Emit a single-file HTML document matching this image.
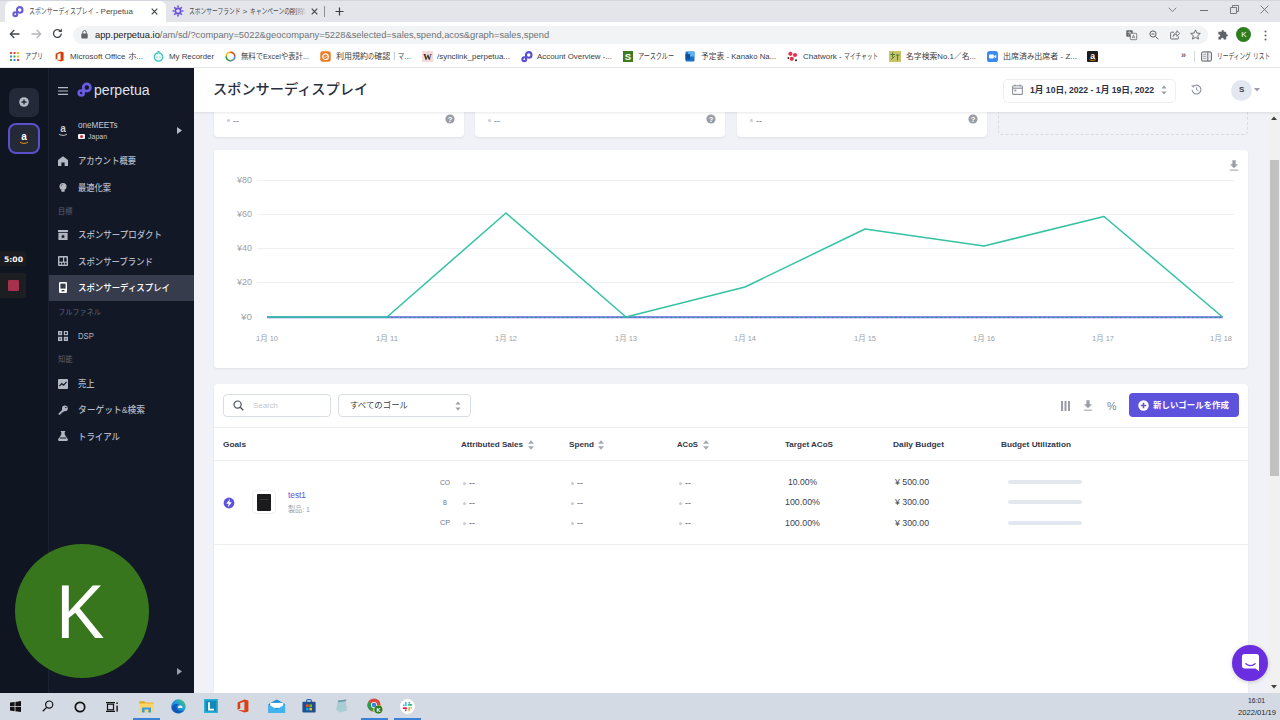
<!DOCTYPE html>
<html lang="ja">
<head>
<meta charset="utf-8">
<title>スポンサーディスプレイ - Perpetua</title>
<style>
*{box-sizing:border-box;margin:0;padding:0}
html,body{width:1280px;height:720px;overflow:hidden;background:#fff}
body{font-family:"Liberation Sans","Noto Sans CJK JP",sans-serif;position:relative;color:#2d3142}
.abs{position:absolute}
.t{position:absolute;white-space:nowrap;line-height:1;transform-origin:0 50%}
svg{position:absolute;overflow:visible}
</style>
</head>
<body>
<div class="abs" style="left:0px;top:0px;width:1280px;height:22px;background:#e3e5eb;"></div>
<div class="abs" style="left:0px;top:0px;width:1280px;height:1px;background:#d3d6dc;"></div>
<div class="abs" style="left:5px;top:1px;width:160.5px;height:22px;background:#fff;border-radius:6px 6px 0 0"></div>
<div class="abs" style="left:0px;top:22px;width:1280px;height:24px;background:#fff;"></div>
<div class="abs" style="left:72.5px;top:25.5px;width:1135px;height:18.5px;background:#f1f3f4;border-radius:9.25px"></div>
<div class="abs" style="left:0px;top:46px;width:1280px;height:22px;background:#fff;border-bottom:1px solid #e6e8eb"></div>
<svg style="left:12px;top:6px" width="12" height="12" viewBox="0 0 12 12"><g fill="none" stroke="#6a5bd8" stroke-width="2.1"><circle cx="7.7" cy="3.9" r="2.8"/><circle cx="3.3" cy="8.2" r="1.9"/><path d="M5.05 3.9V8.2"/></g></svg>
<div class="t" style="left:29px;top:7.66px;color:#45494d;font-size:8px;"><span style="display:inline-block;transform:scaleX(0.738);transform-origin:0 50%;margin-right:-23.03px">スポンサーディスプレイ</span> - Perpetua</div>
<svg style="left:151px;top:8px" width="7" height="7" viewBox="0 0 7 7"><path d="M0.7 0.7L6.3 6.3M6.3 0.7L0.7 6.3" stroke="#3c4043" stroke-width="1.1"/></svg>
<svg style="left:172px;top:5px" width="12" height="12" viewBox="0 0 12 12"><g stroke="#6a4fd8" stroke-width="1.6" fill="none"><circle cx="6" cy="6" r="2.6"/><path d="M6 0.6V2.6M6 9.4V11.4M0.6 6H2.6M9.4 6H11.4M2.2 2.2L3.6 3.6M8.4 8.4L9.8 9.8M2.2 9.8L3.6 8.4M8.4 3.6L9.8 2.2"/></g></svg>
<div class="t" style="left:189px;top:7.66px;color:#45494d;font-size:8px;width:122px;overflow:hidden;"><span style="display:inline-block;transform:scaleX(0.720);transform-origin:0 50%;margin-right:-20.16px">スポンサーブランド</span> &gt; <span style="display:inline-block;transform:scaleX(0.720);transform-origin:0 50%;margin-right:-15.68px">キャンペーンの</span>削除</div>
<div class="abs" style="left:293px;top:4px;width:18px;height:15px;background:linear-gradient(90deg,rgba(227,229,235,0),#e3e5eb 80%);"></div>
<div class="abs" style="left:309px;top:4px;width:16px;height:15px;background:#e3e5eb;"></div>
<svg style="left:311px;top:8px" width="7" height="7" viewBox="0 0 7 7"><path d="M0.7 0.7L6.3 6.3M6.3 0.7L0.7 6.3" stroke="#3c4043" stroke-width="1.1"/></svg>
<div class="abs" style="left:324px;top:6px;width:1px;height:11px;background:#8a8f98;"></div>
<svg style="left:335px;top:7px" width="9" height="9" viewBox="0 0 9 9"><path d="M4.5 0.5V8.5M0.5 4.5H8.5" stroke="#3c4043" stroke-width="1.2"/></svg>
<svg style="left:1168px;top:7px" width="9" height="6" viewBox="0 0 9 6"><path d="M0.8 0.8L4.5 4.6L8.2 0.8" stroke="#7a7e85" stroke-width="1" fill="none"/></svg>
<div class="abs" style="left:1200px;top:10px;width:8px;height:1px;background:#6a6e75;"></div>
<svg style="left:1230px;top:5px" width="9" height="9" viewBox="0 0 9 9"><path d="M0.5 2.5H6.5V8.5H0.5ZM2.5 2.5V0.5H8.5V6.5H6.5" stroke="#6a6e75" stroke-width="0.9" fill="none"/></svg>
<svg style="left:1260px;top:5px" width="9" height="9" viewBox="0 0 9 9"><path d="M0.6 0.6L8.4 8.4M8.4 0.6L0.6 8.4" stroke="#6a6e75" stroke-width="0.9"/></svg>
<svg style="left:9px;top:29px" width="11" height="10" viewBox="0 0 11 10"><path d="M10.5 5H1.5M5.3 1L1.3 5L5.3 9" stroke="#45494d" stroke-width="1.3" fill="none"/></svg>
<svg style="left:31px;top:29px" width="11" height="10" viewBox="0 0 11 10"><path d="M0.5 5H9.5M5.7 1L9.7 5L5.7 9" stroke="#b4b7bc" stroke-width="1.3" fill="none"/></svg>
<svg style="left:52px;top:28px" width="11" height="11" viewBox="0 0 11 11"><path d="M9.3 5.6A3.9 3.9 0 1 1 8.1 2.7" stroke="#45494d" stroke-width="1.3" fill="none"/><path d="M6.3 3.9H9.9V0.4Z" fill="#45494d"/></svg>
<svg style="left:80.5px;top:29.8px" width="7" height="9" viewBox="0 0 7 9"><rect x="0.3" y="3.6" width="6.4" height="5" rx="0.8" fill="#5f6368"/><path d="M1.7 4V2.4A1.8 1.8 0 0 1 5.3 2.4V4" stroke="#5f6368" stroke-width="1" fill="none"/></svg>
<div class="t" style="left:95px;top:30.39px;color:#6f7378;font-size:9.6px;transform:scaleX(0.972);"><span style="color:#202124">app.perpetua.io</span>/am/sd/?company=5022&amp;geocompany=5228&amp;selected=sales,spend,acos&amp;graph=sales,spend</div>
<svg style="left:1126px;top:29.8px" width="11" height="10" viewBox="0 0 11 10"><rect x="0.3" y="0.3" width="6.4" height="6.4" rx="0.8" fill="#5f6368"/><rect x="4.3" y="3.3" width="6.4" height="6.4" rx="0.8" fill="#fff" stroke="#5f6368" stroke-width="0.8"/><path d="M6 8.4L7.5 4.8L9 8.4M6.5 7.3H8.5" stroke="#5f6368" stroke-width="0.7" fill="none"/><path d="M1.6 2.3H5.2M3.4 1.4V2.3M2 5.2C3.4 4.4 4.2 3.4 4.5 2.3" stroke="#fff" stroke-width="0.6" fill="none"/></svg>
<svg style="left:1148.5px;top:29.8px" width="10" height="10" viewBox="0 0 10 10"><circle cx="4" cy="4" r="3.1" stroke="#5f6368" stroke-width="1" fill="none"/><path d="M6.4 6.4L9.3 9.3M2.5 4H5.5" stroke="#5f6368" stroke-width="1"/></svg>
<svg style="left:1169.5px;top:28.8px" width="10" height="11" viewBox="0 0 10 11"><path d="M4 3.2H1.6A1 1 0 0 0 0.6 4.2V9A1 1 0 0 0 1.6 10H7.4A1 1 0 0 0 8.4 9V7.4" stroke="#5f6368" stroke-width="0.9" fill="none"/><path d="M3.2 7.4C3.4 5 5 3.8 6.8 3.6V1.6L9.7 4.4L6.8 7.2V5.2C5.4 5.2 4.2 5.8 3.2 7.4Z" stroke="#5f6368" stroke-width="0.8" fill="none"/></svg>
<svg style="left:1190.3px;top:28.9px" width="11" height="11" viewBox="0 0 11 11"><path d="M5.5 0.9L6.9 4.1L10.3 4.4L7.7 6.7L8.5 10.1L5.5 8.3L2.5 10.1L3.3 6.7L0.7 4.4L4.1 4.1Z" stroke="#5f6368" stroke-width="0.9" fill="none" stroke-linejoin="round"/></svg>
<svg style="left:1217.5px;top:29.8px" width="10" height="10" viewBox="0 0 10 10"><path d="M3.6 1.2A1.1 1.1 0 0 1 5.8 1.2V1.8H8.2V4.2H8.8A1.1 1.1 0 0 1 8.8 6.4H8.2V9.6H5.6V8.9A1.2 1.2 0 0 0 3.2 8.9V9.6H0.4V6.8H1.1A1.2 1.2 0 0 0 1.1 4.4H0.4V1.8H3.6Z" fill="#5f6368"/></svg>
<div class="abs" style="left:1236.4px;top:27.2px;width:15px;height:15px;background:#2e7d1f;border-radius:50%"></div>
<div class="t" style="left:1241.2px;top:31.16px;color:#fff;font-size:8px;">K</div>
<svg style="left:1264.3px;top:29.7px" width="3" height="11" viewBox="0 0 3 11"><circle cx="1.5" cy="1.5" r="1" fill="#5f6368"/><circle cx="1.5" cy="5.5" r="1" fill="#5f6368"/><circle cx="1.5" cy="9.5" r="1" fill="#5f6368"/></svg>
<svg style="left:10px;top:52px" width="9" height="9" viewBox="0 0 9 9"><rect x="0" y="0" width="2" height="2" fill="#ea4335"/><rect x="3.5" y="0" width="2" height="2" fill="#ea4335"/><rect x="7" y="0" width="2" height="2" fill="#fbbc05"/><rect x="0" y="3.5" width="2" height="2" fill="#4285f4"/><rect x="3.5" y="3.5" width="2" height="2" fill="#34a853"/><rect x="7" y="3.5" width="2" height="2" fill="#fbbc05"/><rect x="0" y="7" width="2" height="2" fill="#34a853"/><rect x="3.5" y="7" width="2" height="2" fill="#4285f4"/><rect x="7" y="7" width="2" height="2" fill="#ea4335"/></svg>
<div class="t" style="left:25px;top:53.06px;color:#3c4043;font-size:8px;"><span style="display:inline-block;transform:scaleX(0.750);transform-origin:0 50%;margin-right:-6.00px">アプリ</span></div>
<svg style="left:55px;top:51px" width="9" height="11" viewBox="0 0 9 11"><path d="M0.6 2.8L5.6 0.4L8.6 1.4V9.6L5.6 10.6L0.6 8.4L5.6 9V2.2L2.4 3.2V7.4L0.6 8.4Z" fill="#d83b01"/></svg>
<div class="t" style="left:70px;top:53.06px;color:#3c4043;font-size:8px;">Microsoft Office <span style="display:inline-block;transform:scaleX(1.086);transform-origin:0 50%;margin-right:0.69px">ホ</span>...</div>
<svg style="left:153px;top:51px" width="11" height="11" viewBox="0 0 11 11"><circle cx="5.5" cy="6" r="4.2" fill="#e8fbfa" stroke="#2fc6c2" stroke-width="1.2"/><path d="M4.3 0.7H6.7" stroke="#2fc6c2" stroke-width="1.2"/><circle cx="4" cy="6" r="0.6" fill="#e57a44"/><circle cx="7" cy="6" r="0.6" fill="#e57a44"/></svg>
<div class="t" style="left:169px;top:53.06px;color:#3c4043;font-size:8px;transform:scaleX(0.983);">My Recorder</div>
<svg style="left:225px;top:51px" width="11" height="11" viewBox="0 0 11 11"><circle cx="5.5" cy="5.5" r="4.3" fill="none" stroke="#f4b400" stroke-width="1.5"/><path d="M5.5 1.2A4.3 4.3 0 0 1 9.8 5.5" stroke="#db4437" stroke-width="1.5" fill="none"/><path d="M1.2 5.5A4.3 4.3 0 0 0 5.5 9.8" stroke="#0f9d58" stroke-width="1.5" fill="none"/><path d="M5.5 9.8A4.3 4.3 0 0 0 9.8 5.5" stroke="#4285f4" stroke-width="1.5" fill="none"/></svg>
<div class="t" style="left:241px;top:53.06px;color:#3c4043;font-size:8px;transform:scaleX(0.916);">無料でExcelや表計...</div>
<svg style="left:320px;top:51px" width="11" height="11" viewBox="0 0 11 11"><rect x="0.3" y="0.3" width="10.4" height="10.4" rx="2.2" fill="#ee7a22"/><circle cx="5.5" cy="5.7" r="2.8" fill="none" stroke="#fff" stroke-width="1.2"/><path d="M4.2 5.7L5.2 6.7L7 4.6" stroke="#fff" stroke-width="0.9" fill="none"/></svg>
<div class="t" style="left:336px;top:53.06px;color:#3c4043;font-size:8px;">利用規約<span style="display:inline-block;transform:scaleX(0.771);transform-origin:0 50%;margin-right:-1.84px">の</span>確認｜<span style="display:inline-block;transform:scaleX(0.771);transform-origin:0 50%;margin-right:-1.84px">マ</span>...</div>
<svg style="left:422px;top:51px" width="11" height="11" viewBox="0 0 11 11"><rect width="11" height="11" fill="#f6dada"/><text x="5.5" y="8.6" font-size="8.5" font-weight="bold" font-family="Liberation Serif,serif" text-anchor="middle" fill="#222">W</text></svg>
<div class="t" style="left:437px;top:53.06px;color:#3c4043;font-size:8px;transform:scaleX(0.995);">/synclink_perpetua...</div>
<svg style="left:521px;top:51px" width="12" height="12" viewBox="0 0 12 12"><g fill="none" stroke="#5a4fd0" stroke-width="2.1"><circle cx="7.7" cy="3.9" r="2.8"/><circle cx="3.3" cy="8.2" r="1.9"/><path d="M5.05 3.9V8.2"/></g></svg>
<div class="t" style="left:537px;top:53.06px;color:#3c4043;font-size:8px;transform:scaleX(0.986);">Account Overview -...</div>
<svg style="left:623px;top:51px" width="10" height="11" viewBox="0 0 10 11"><rect width="10" height="11" fill="#3f7a27"/><text x="5" y="9" font-size="9.5" font-weight="bold" font-family="Liberation Sans,sans-serif" text-anchor="middle" fill="#fff">S</text></svg>
<div class="t" style="left:638px;top:53.06px;color:#3c4043;font-size:8px;"><span style="display:inline-block;transform:scaleX(0.773);transform-origin:0 50%;margin-right:-10.89px">アースクルー</span></div>
<svg style="left:685px;top:51px" width="10" height="11" viewBox="0 0 10 11"><rect x="0.5" y="0.5" width="9" height="10" rx="1" fill="#1b72c4"/><rect x="3" y="0.5" width="6.5" height="5" fill="#5db1f0"/><rect x="0.5" y="3" width="4.5" height="5.5" fill="#0f4f9a"/></svg>
<div class="t" style="left:701px;top:53.06px;color:#3c4043;font-size:8px;transform:scaleX(0.970);">予定表 - Kanako Na...</div>
<svg style="left:787px;top:51px" width="11" height="11" viewBox="0 0 11 11"><g fill="#e8324a"><circle cx="3.4" cy="2.8" r="2.1"/><circle cx="8" cy="4" r="2.1"/><circle cx="4.8" cy="7.8" r="2.1"/></g><circle cx="9" cy="9.2" r="1" fill="#222"/><circle cx="1.4" cy="7" r="0.9" fill="#222"/></svg>
<div class="t" style="left:803px;top:53.06px;color:#3c4043;font-size:8px;">Chatwork - <span style="display:inline-block;transform:scaleX(0.712);transform-origin:0 50%;margin-right:-13.83px">マイチャット</span></div>
<svg style="left:889px;top:51px" width="12" height="11" viewBox="0 0 12 11"><rect width="12" height="11" fill="#c9c46a"/><path d="M1.5 3.5H6M3.6 1.4V6.4M2 8.6L5.6 5.4M7 4H10.5M8.6 4V9.5" stroke="#4f7a2a" stroke-width="1"/></svg>
<div class="t" style="left:906px;top:53.06px;color:#3c4043;font-size:8px;transform:scaleX(0.978);">名字検索No.1／名...</div>
<svg style="left:987px;top:51px" width="11" height="11" viewBox="0 0 11 11"><rect width="11" height="11" rx="2.6" fill="#3c8cf0"/><rect x="2" y="3.6" width="4.8" height="3.8" rx="0.8" fill="#fff"/><path d="M7.2 5L9.2 3.7V7.3L7.2 6Z" fill="#fff"/></svg>
<div class="t" style="left:1003px;top:53.06px;color:#3c4043;font-size:8px;">出席済<span style="display:inline-block;transform:scaleX(0.916);transform-origin:0 50%;margin-right:-0.67px">み</span>出席者 - Z...</div>
<svg style="left:1087px;top:51px" width="11" height="11" viewBox="0 0 11 11"><rect width="11" height="11" rx="1" fill="#1c1c1c"/><text x="5.5" y="7.6" font-size="8.5" font-weight="bold" font-family="Liberation Sans,sans-serif" text-anchor="middle" fill="#fff">a</text><path d="M2.4 8.6C4.4 9.8 6.8 9.8 8.8 8.6" stroke="#f90" stroke-width="0.8" fill="none"/></svg>
<div class="t" style="left:1181px;top:51.18px;color:#5f6368;font-size:9px;font-weight:bold;">»</div>
<div class="abs" style="left:1194px;top:50.5px;width:1px;height:11px;background:#d5d8dd;"></div>
<svg style="left:1201px;top:51px" width="11" height="11" viewBox="0 0 11 11"><rect x="0.6" y="0.9" width="9.8" height="9.2" rx="1.2" fill="#eceef0" stroke="#5f6368" stroke-width="1"/><path d="M6.8 1V10" stroke="#5f6368" stroke-width="0.9"/><path d="M2.2 3.4H5.2M2.2 5.4H5.2M2.2 7.4H5.2" stroke="#8a8e94" stroke-width="0.7"/></svg>
<div class="t" style="left:1217px;top:53.06px;color:#3c4043;font-size:8px;"><span style="display:inline-block;transform:scaleX(0.713);transform-origin:0 50%;margin-right:-13.78px">リーディング</span> <span style="display:inline-block;transform:scaleX(0.713);transform-origin:0 50%;margin-right:-6.89px">リスト</span></div>
<div class="abs" style="left:194px;top:68px;width:1074px;height:625px;background:#f0f2f7;"></div>
<div class="abs" style="left:214px;top:100px;width:250px;height:37px;background:#fff;border-radius:4px;box-shadow:0 1px 2px rgba(60,70,100,.10);"></div>
<div class="abs" style="left:227px;top:119px;width:3px;height:3px;background:#c9ccd3;border-radius:50%"></div>
<div class="t" style="left:233px;top:116.66px;color:#8b8f9a;font-size:8px;font-weight:bold;transform:scaleX(1.126);">--</div>
<svg style="left:445px;top:114px" width="10" height="10" viewBox="0 0 10 10"><circle cx="5" cy="5" r="4.6" fill="#9a9da6"/><text x="5" y="7.6" font-size="7.5" font-weight="bold" text-anchor="middle" fill="#fff" font-family="Liberation Sans,sans-serif">?</text></svg>
<div class="abs" style="left:475px;top:100px;width:250px;height:37px;background:#fff;border-radius:4px;box-shadow:0 1px 2px rgba(60,70,100,.10);"></div>
<div class="abs" style="left:488px;top:119px;width:3px;height:3px;background:#c9ccd3;border-radius:50%"></div>
<div class="t" style="left:494px;top:116.66px;color:#8b8f9a;font-size:8px;font-weight:bold;transform:scaleX(1.126);">--</div>
<svg style="left:706px;top:114px" width="10" height="10" viewBox="0 0 10 10"><circle cx="5" cy="5" r="4.6" fill="#9a9da6"/><text x="5" y="7.6" font-size="7.5" font-weight="bold" text-anchor="middle" fill="#fff" font-family="Liberation Sans,sans-serif">?</text></svg>
<div class="abs" style="left:737px;top:100px;width:250px;height:37px;background:#fff;border-radius:4px;box-shadow:0 1px 2px rgba(60,70,100,.10);"></div>
<div class="abs" style="left:750px;top:119px;width:3px;height:3px;background:#c9ccd3;border-radius:50%"></div>
<div class="t" style="left:756px;top:116.66px;color:#8b8f9a;font-size:8px;font-weight:bold;transform:scaleX(1.126);">--</div>
<svg style="left:968px;top:114px" width="10" height="10" viewBox="0 0 10 10"><circle cx="5" cy="5" r="4.6" fill="#9a9da6"/><text x="5" y="7.6" font-size="7.5" font-weight="bold" text-anchor="middle" fill="#fff" font-family="Liberation Sans,sans-serif">?</text></svg>
<div class="abs" style="left:998px;top:100px;width:250px;height:35px;background:#f0f2f7;border:1px dashed #d5dae4;border-radius:4px"></div>
<div class="abs" style="left:214px;top:150px;width:1034px;height:218px;background:#fff;border-radius:4px;box-shadow:0 1px 2px rgba(60,70,100,.10);"></div>
<svg style="left:1229px;top:160px" width="10" height="11" viewBox="0 0 10 11"><path d="M3.4 0.3H6.6V4.2H9L5 8.2L1 4.2H3.4Z" fill="#9a9da8"/><rect x="0.8" y="9.6" width="8.4" height="1" fill="#9a9da8"/></svg>
<svg style="left:0;top:0" width="1280" height="720" viewBox="0 0 1280 720"><g stroke="#eef0f4" stroke-width="1"><path d="M257 180.5H1234"/><path d="M257 214.5H1234"/><path d="M257 248.5H1234"/><path d="M257 282.5H1234"/></g><path d="M267 317.3H1222.5" stroke="#6c5fe0" stroke-width="2" fill="none"/><path d="M267 317.3H1222.5" stroke="#35c4a3" stroke-width="1" stroke-dasharray="2.5 2" fill="none"/><path d="M267 317 L387 317 L506 213 L626 317 L745 287 L865 229 L984 246 L1104 216.5 L1222.5 317" stroke="#34c3a2" stroke-width="1.5" fill="none" stroke-linejoin="round"/></svg>
<div class="t" style="left:237px;top:175.92px;color:#9b9fa9;font-size:8.5px;transform:scaleX(1.057);">¥80</div>
<div class="t" style="left:237px;top:209.92px;color:#9b9fa9;font-size:8.5px;transform:scaleX(1.057);">¥60</div>
<div class="t" style="left:237px;top:243.92px;color:#9b9fa9;font-size:8.5px;transform:scaleX(1.057);">¥40</div>
<div class="t" style="left:237px;top:277.92px;color:#9b9fa9;font-size:8.5px;transform:scaleX(1.057);">¥20</div>
<div class="t" style="left:241px;top:312.92px;color:#9b9fa9;font-size:8.5px;transform:scaleX(1.162);">¥0</div>
<div class="t" style="left:256px;top:335.16px;color:#9b9fa9;font-size:8px;transform:scaleX(0.933);">1月 10</div>
<div class="t" style="left:376px;top:335.16px;color:#9b9fa9;font-size:8px;transform:scaleX(0.957);">1月 11</div>
<div class="t" style="left:495px;top:335.16px;color:#9b9fa9;font-size:8px;transform:scaleX(0.933);">1月 12</div>
<div class="t" style="left:615px;top:335.16px;color:#9b9fa9;font-size:8px;transform:scaleX(0.933);">1月 13</div>
<div class="t" style="left:734px;top:335.16px;color:#9b9fa9;font-size:8px;transform:scaleX(0.933);">1月 14</div>
<div class="t" style="left:854px;top:335.16px;color:#9b9fa9;font-size:8px;transform:scaleX(0.933);">1月 15</div>
<div class="t" style="left:973px;top:335.16px;color:#9b9fa9;font-size:8px;transform:scaleX(0.933);">1月 16</div>
<div class="t" style="left:1092px;top:335.16px;color:#9b9fa9;font-size:8px;transform:scaleX(0.933);">1月 17</div>
<div class="t" style="left:1210px;top:335.16px;color:#9b9fa9;font-size:8px;transform:scaleX(0.933);">1月 18</div>
<div class="abs" style="left:214px;top:384px;width:1034px;height:320px;background:#fff;border-radius:4px;box-shadow:0 1px 2px rgba(60,70,100,.10);"></div>
<div class="abs" style="left:223px;top:394px;width:108px;height:23px;background:#fff;border:1px solid #d9dde6;border-radius:4px"></div>
<svg style="left:233px;top:400px" width="11" height="11" viewBox="0 0 11 11"><circle cx="4.6" cy="4.6" r="3.6" fill="none" stroke="#4a4f5c" stroke-width="1.2"/><path d="M7.3 7.3L10.3 10.3" stroke="#4a4f5c" stroke-width="1.3"/></svg>
<div class="t" style="left:253px;top:401.66px;color:#c3c7d1;font-size:8px;transform:scaleX(0.986);">Search</div>
<div class="abs" style="left:338px;top:394px;width:133px;height:23px;background:#fff;border:1px solid #d9dde6;border-radius:4px"></div>
<div class="t" style="left:350px;top:401.42px;color:#3a3f50;font-size:8.5px;transform:scaleX(0.990);">すべてのゴール</div>
<svg style="left:455px;top:401px" width="6" height="10" viewBox="0 0 6 10"><path d="M0.5 3.6L3 0.6L5.5 3.6Z" fill="#9a9da8"/><path d="M0.5 6.4L3 9.4L5.5 6.4Z" fill="#9a9da8"/></svg>
<svg style="left:1061px;top:401px" width="9" height="10" viewBox="0 0 9 10"><rect x="0" y="0" width="2" height="10" fill="#9a9da8"/><rect x="3.5" y="0" width="2" height="10" fill="#9a9da8"/><rect x="7" y="0" width="2" height="10" fill="#9a9da8"/></svg>
<svg style="left:1083px;top:400px" width="10" height="11" viewBox="0 0 10 11"><path d="M3.4 0.3H6.6V4.2H9L5 8.2L1 4.2H3.4Z" fill="#9a9da8"/><rect x="0.8" y="9.6" width="8.4" height="1" fill="#9a9da8"/></svg>
<div class="t" style="left:1106.5px;top:400.52px;color:#80848f;font-size:11px;transform:scaleX(0.971);">%</div>
<div class="abs" style="left:1129px;top:393px;width:110px;height:24px;background:#5d52dc;border-radius:4px"></div>
<svg style="left:1138px;top:400px" width="11" height="11" viewBox="0 0 11 11"><circle cx="5.5" cy="5.5" r="5.2" fill="#fff"/><path d="M5.5 2.8V8.2M2.8 5.5H8.2" stroke="#5d52dc" stroke-width="1.5"/></svg>
<div class="t" style="left:1153px;top:401.22px;color:#fff;font-size:8.5px;font-weight:bold;transform:scaleX(0.993);">新しいゴールを作成</div>
<div class="abs" style="left:214px;top:427px;width:1034px;height:1px;background:#eceff4;"></div>
<div class="abs" style="left:214px;top:460px;width:1034px;height:1px;background:#eceff4;"></div>
<div class="abs" style="left:214px;top:544px;width:1034px;height:1px;background:#eceff4;"></div>
<div class="t" style="left:223px;top:440.66px;color:#33374a;font-size:8px;font-weight:bold;transform:scaleX(1.034);">Goals</div>
<div class="t" style="left:461px;top:440.66px;color:#33374a;font-size:8px;font-weight:bold;transform:scaleX(1.011);">Attributed Sales</div>
<div class="t" style="left:569px;top:440.66px;color:#33374a;font-size:8px;font-weight:bold;transform:scaleX(1.022);">Spend</div>
<div class="t" style="left:677px;top:440.66px;color:#33374a;font-size:8px;font-weight:bold;transform:scaleX(0.964);">ACoS</div>
<div class="t" style="left:785px;top:440.66px;color:#33374a;font-size:8px;font-weight:bold;transform:scaleX(1.009);">Target ACoS</div>
<div class="t" style="left:893px;top:440.66px;color:#33374a;font-size:8px;font-weight:bold;transform:scaleX(1.043);">Daily Budget</div>
<div class="t" style="left:1001px;top:440.66px;color:#33374a;font-size:8px;font-weight:bold;transform:scaleX(1.029);">Budget Utilization</div>
<svg style="left:528px;top:439.8px" width="6" height="10" viewBox="0 0 6 10"><path d="M0 3.8L3 0.2L6 3.8Z" fill="#a4a8b3"/><path d="M0 6.2L3 9.8L6 6.2Z" fill="#a4a8b3"/></svg>
<svg style="left:598px;top:439.8px" width="6" height="10" viewBox="0 0 6 10"><path d="M0 3.8L3 0.2L6 3.8Z" fill="#a4a8b3"/><path d="M0 6.2L3 9.8L6 6.2Z" fill="#a4a8b3"/></svg>
<svg style="left:703px;top:439.8px" width="6" height="10" viewBox="0 0 6 10"><path d="M0 3.8L3 0.2L6 3.8Z" fill="#a4a8b3"/><path d="M0 6.2L3 9.8L6 6.2Z" fill="#a4a8b3"/></svg>
<div class="t" style="left:440px;top:478.66px;color:#6f7483;font-size:8px;transform:scaleX(0.833);">CO</div>
<div class="abs" style="left:463px;top:481.5px;width:3px;height:3px;background:#c9ccd3;border-radius:50%"></div>
<div class="t" style="left:469px;top:478.66px;color:#777b87;font-size:8px;font-weight:bold;transform:scaleX(1.126);">--</div>
<div class="abs" style="left:571px;top:481.5px;width:3px;height:3px;background:#c9ccd3;border-radius:50%"></div>
<div class="t" style="left:577px;top:478.66px;color:#777b87;font-size:8px;font-weight:bold;transform:scaleX(1.126);">--</div>
<div class="abs" style="left:679px;top:481.5px;width:3px;height:3px;background:#c9ccd3;border-radius:50%"></div>
<div class="t" style="left:685px;top:478.66px;color:#777b87;font-size:8px;font-weight:bold;transform:scaleX(1.126);">--</div>
<div class="t" style="left:788px;top:478.42px;color:#3a3f50;font-size:8.5px;transform:scaleX(1.005);">10.00%</div>
<div class="t" style="left:895px;top:478.42px;color:#3a3f50;font-size:8.5px;transform:scaleX(1.027);">¥ 500.00</div>
<div class="abs" style="left:1008px;top:480.0px;width:74px;height:4px;background:#e3e7ef;border-radius:2px"></div>
<div class="t" style="left:443px;top:498.66px;color:#6f7483;font-size:8px;transform:scaleX(0.749);">B</div>
<div class="abs" style="left:463px;top:501.5px;width:3px;height:3px;background:#c9ccd3;border-radius:50%"></div>
<div class="t" style="left:469px;top:498.66px;color:#777b87;font-size:8px;font-weight:bold;transform:scaleX(1.126);">--</div>
<div class="abs" style="left:571px;top:501.5px;width:3px;height:3px;background:#c9ccd3;border-radius:50%"></div>
<div class="t" style="left:577px;top:498.66px;color:#777b87;font-size:8px;font-weight:bold;transform:scaleX(1.126);">--</div>
<div class="abs" style="left:679px;top:501.5px;width:3px;height:3px;background:#c9ccd3;border-radius:50%"></div>
<div class="t" style="left:685px;top:498.66px;color:#777b87;font-size:8px;font-weight:bold;transform:scaleX(1.126);">--</div>
<div class="t" style="left:785px;top:498.42px;color:#3a3f50;font-size:8.5px;transform:scaleX(1.043);">100.00%</div>
<div class="t" style="left:895px;top:498.42px;color:#3a3f50;font-size:8.5px;transform:scaleX(1.027);">¥ 300.00</div>
<div class="abs" style="left:1008px;top:500.0px;width:74px;height:4px;background:#e3e7ef;border-radius:2px"></div>
<div class="t" style="left:440px;top:519.16px;color:#6f7483;font-size:8px;transform:scaleX(0.899);">CP</div>
<div class="abs" style="left:463px;top:522px;width:3px;height:3px;background:#c9ccd3;border-radius:50%"></div>
<div class="t" style="left:469px;top:519.16px;color:#777b87;font-size:8px;font-weight:bold;transform:scaleX(1.126);">--</div>
<div class="abs" style="left:571px;top:522px;width:3px;height:3px;background:#c9ccd3;border-radius:50%"></div>
<div class="t" style="left:577px;top:519.16px;color:#777b87;font-size:8px;font-weight:bold;transform:scaleX(1.126);">--</div>
<div class="abs" style="left:679px;top:522px;width:3px;height:3px;background:#c9ccd3;border-radius:50%"></div>
<div class="t" style="left:685px;top:519.16px;color:#777b87;font-size:8px;font-weight:bold;transform:scaleX(1.126);">--</div>
<div class="t" style="left:785px;top:518.92px;color:#3a3f50;font-size:8.5px;transform:scaleX(1.043);">100.00%</div>
<div class="t" style="left:895px;top:518.92px;color:#3a3f50;font-size:8.5px;transform:scaleX(1.027);">¥ 300.00</div>
<div class="abs" style="left:1008px;top:520.5px;width:74px;height:4px;background:#e3e7ef;border-radius:2px"></div>
<svg style="left:223px;top:496.5px" width="12" height="12" viewBox="0 0 12 12"><circle cx="6" cy="6" r="5.4" fill="#5d52dc"/><path d="M7 1.8L3.2 6.8H5.6L5 10.2L8.8 5.2H6.4Z" fill="#fff"/></svg>
<div class="abs" style="left:252px;top:490px;width:24px;height:24px;background:#fff;border:1px solid #eceff4;border-radius:4px"></div>
<div class="abs" style="left:257px;top:494px;width:14px;height:17px;background:#1b1b1d;border-radius:1px"></div>
<div class="abs" style="left:260px;top:499px;width:8px;height:1px;background:#3a3a3e;"></div>
<div class="t" style="left:288px;top:490.92px;color:#5d52dc;font-size:8.5px;transform:scaleX(0.976);">test1</div>
<div class="t" style="left:288px;top:505.9px;color:#9b9fa9;font-size:7.5px;transform:scaleX(0.942);">製品: 1</div>
<div class="abs" style="left:1268px;top:112px;width:12px;height:581px;background:#f1f1f1;"></div>
<div class="abs" style="left:1270px;top:160px;width:9px;height:316px;background:#c1c1c1;"></div>
<svg style="left:1271px;top:116px" width="6" height="4" viewBox="0 0 6 4"><path d="M0 4L3 0.4L6 4Z" fill="#404040"/></svg>
<svg style="left:1271px;top:685px" width="6" height="4" viewBox="0 0 6 4"><path d="M0 0L3 3.6L6 0Z" fill="#404040"/></svg>
<div class="abs" style="left:1232px;top:645px;width:36px;height:36px;background:#6b2de0;border-radius:50%;box-shadow:0 1px 4px rgba(0,0,0,.2)"></div>
<svg style="left:1240.6px;top:653.4px" width="19" height="19.4" viewBox="0 0 18 18"><path d="M3.5 0.8H14.5A2.6 2.6 0 0 1 17.1 3.4V17.2L13.6 14.6H3.5A2.6 2.6 0 0 1 0.9 12V3.4A2.6 2.6 0 0 1 3.5 0.8Z" fill="#fff"/><path d="M4.6 10C7.2 12 10.8 12 13.4 10" stroke="#6b2de0" stroke-width="1.2" fill="none" stroke-linecap="round"/></svg>
<div class="abs" style="left:194px;top:68px;width:1086px;height:44px;background:#fff;box-shadow:0 1px 2px rgba(60,70,100,.12)"></div>
<div class="t" style="left:213px;top:82.48px;color:#2a2e3f;font-size:14.2px;font-weight:500;">スポンサーディスプレイ</div>
<div class="abs" style="left:1003px;top:78.5px;width:173px;height:24px;background:#fff;border:1px solid #edeff4;border-radius:5px"></div>
<svg style="left:1012px;top:84px" width="11" height="11" viewBox="0 0 11 11"><rect x="0.6" y="1.8" width="9.8" height="8.6" rx="1" fill="none" stroke="#8f93a0" stroke-width="1.1"/><path d="M0.6 4.2H10.4" stroke="#8f93a0" stroke-width="1.2"/><path d="M3 0.4V2.6M8 0.4V2.6" stroke="#8f93a0" stroke-width="1.1"/><rect x="2.4" y="5.6" width="2" height="1.8" fill="#8f93a0"/></svg>
<div class="t" style="left:1030px;top:85.68px;color:#2d3142;font-size:9px;font-weight:bold;transform:scaleX(0.961);">1月 10日, 2022 - 1月 19日, 2022</div>
<svg style="left:1161px;top:85px" width="6" height="10" viewBox="0 0 6 10"><path d="M0.5 3.6L3 0.6L5.5 3.6Z" fill="#9a9da8"/><path d="M0.5 6.4L3 9.4L5.5 6.4Z" fill="#9a9da8"/></svg>
<svg style="left:1191px;top:84px" width="11" height="11" viewBox="0 0 11 11"><path d="M2.2 2.6A4.4 4.4 0 1 1 1.1 5.8" stroke="#8f93a0" stroke-width="1.1" fill="none"/><path d="M0.2 1.4L2.9 1.2L2.7 4Z" fill="#8f93a0"/><path d="M5.6 3.2V5.8L7.4 6.9" stroke="#8f93a0" stroke-width="1" fill="none"/></svg>
<div class="abs" style="left:1231px;top:79.5px;width:21px;height:21px;background:#e3e7f0;border-radius:50%"></div>
<div class="t" style="left:1238.9px;top:86.16px;color:#3a3f50;font-size:8px;font-weight:bold;">S</div>
<svg style="left:1254px;top:88px" width="6" height="4" viewBox="0 0 6 4"><path d="M0 0L3 3.6L6 0Z" fill="#9a9da8"/></svg>
<div class="abs" style="left:0px;top:68px;width:48px;height:625px;background:#101522;"></div>
<div class="abs" style="left:48px;top:68px;width:146px;height:625px;background:#121826;border-left:1px solid #1b2130"></div>
<div class="abs" style="left:9px;top:88px;width:30px;height:29px;background:#232937;border-radius:7px"></div>
<svg style="left:19px;top:97px" width="10" height="10" viewBox="0 0 10 10"><circle cx="5" cy="5" r="4.8" fill="#b6bac4"/><path d="M5 2.4V7.6M2.4 5H7.6" stroke="#252b38" stroke-width="1.4"/></svg>
<div class="abs" style="left:8px;top:122.5px;width:32px;height:31.5px;background:#232937;border:2px solid #5b50cc;border-radius:8px"></div>
<svg style="left:19px;top:133px" width="10" height="11" viewBox="0 0 10 11"><text x="5" y="7.4" font-size="10" font-weight="bold" font-family="Liberation Sans,sans-serif" text-anchor="middle" fill="#fff">a</text><path d="M1 9.2C3.4 10.8 6.6 10.8 9 9.2" stroke="#f90" stroke-width="0.9" fill="none"/></svg>
<div class="abs" style="left:0px;top:251px;width:26px;height:15px;background:#1a1c1f;border-radius:0 2px 2px 0"></div>
<div class="t" style="left:4px;top:256.0px;color:#fff;font-size:7.5px;font-weight:bold;font-family:'DejaVu Sans',sans-serif;transform:scaleX(1.018);">5:00</div>
<div class="abs" style="left:0px;top:273px;width:26px;height:25px;background:#1c1e22;border-radius:0 2px 2px 0"></div>
<div class="abs" style="left:8px;top:280px;width:11px;height:11px;background:#a5324a;border-radius:1px"></div>
<div class="abs" style="left:15px;top:544px;width:134px;height:134px;background:#38761d;border-radius:50%"></div>
<div class="t" style="left:56.4px;top:573.52px;color:#fff;font-size:76px;transform:scaleX(0.955);">K</div>
<svg style="left:176.6px;top:667.6px" width="5" height="7" viewBox="0 0 5 7"><path d="M0 0L5 3.5L0 7Z" fill="#9a9eaa"/></svg>
<svg style="left:58px;top:87px" width="10" height="8" viewBox="0 0 10 8"><path d="M0 0.7H10M0 4H10M0 7.3H10" stroke="#b6bac4" stroke-width="1.2"/></svg>
<svg style="left:77px;top:83px" width="17" height="14" viewBox="0 0 17 14"><g fill="none" stroke="#6a5ce0" stroke-width="2.7"><circle cx="9.8" cy="4.5" r="3.6"/><circle cx="4.2" cy="10" r="2.5"/><path d="M6.45 4.5V10"/></g></svg>
<div class="t" style="left:94.4px;top:82.58px;color:#dfe2ea;font-size:14px;transform:scaleX(1.006);">perpetua</div>
<svg style="left:58px;top:125px" width="10" height="11" viewBox="0 0 10 11"><text x="5" y="7.4" font-size="10" font-weight="bold" font-family="Liberation Sans,sans-serif" text-anchor="middle" fill="#c9ccd6">a</text><path d="M1 9.2C3.4 10.8 6.6 10.8 9 9.2" stroke="#c9ccd6" stroke-width="0.9" fill="none"/></svg>
<div class="t" style="left:78px;top:120.68px;color:#c5c9d4;font-size:9px;transform:scaleX(0.907);">oneMEETs</div>
<div class="abs" style="left:77.5px;top:133.5px;width:7.5px;height:5px;background:#f4f4f6;border-radius:1px"></div>
<div class="abs" style="left:79.7px;top:134.5px;width:3px;height:3px;background:#d8263c;border-radius:50%"></div>
<div class="t" style="left:87.5px;top:132.64px;color:#c5c9d4;font-size:7px;transform:scaleX(1.006);">Japan</div>
<svg style="left:177px;top:127px" width="5" height="7" viewBox="0 0 5 7"><path d="M0 0L5 3.5L0 7Z" fill="#b6bac4"/></svg>
<div class="abs" style="left:49px;top:275px;width:145px;height:26px;background:#363c4c;"></div>
<svg style="left:58px;top:156px" width="10" height="10" viewBox="0 0 10 10"><path d="M5 0.3L10 4V10H6.6V6.4H3.4V10H0V4Z" fill="#b4b8c4"/></svg>
<div class="t" style="left:78px;top:157.44px;color:#b4b8c4;font-size:9.3px;font-weight:500;transform:scaleX(0.891);">アカウント概要</div>
<svg style="left:59px;top:183px" width="8" height="9" viewBox="0 0 8 9"><circle cx="4" cy="3.5" r="3.5" fill="#b4b8c4"/><rect x="2.4" y="6.6" width="3.2" height="2.2" rx="0.6" fill="#b4b8c4"/><path d="M2 3.4A2 2 0 0 1 4 1.4" stroke="#121826" stroke-width="0.7" fill="none" opacity="0.6"/></svg>
<div class="t" style="left:78px;top:183.74px;color:#b4b8c4;font-size:9.3px;font-weight:500;transform:scaleX(0.887);">最適化案</div>
<div class="t" style="left:58px;top:207.6px;color:#5a6073;font-size:7.5px;transform:scaleX(0.967);">目標</div>
<svg style="left:58px;top:230px" width="10" height="10" viewBox="0 0 10 10"><rect x="0" y="0" width="10" height="2" fill="#b4b8c4"/><path d="M0.4 2.8H9.6V10H0.4Z" fill="#b4b8c4"/><path d="M5 4.2L5.7 5.8H7.3L6 6.8L6.5 8.4L5 7.4L3.5 8.4L4 6.8L2.7 5.8H4.3Z" fill="#121826"/></svg>
<div class="t" style="left:78px;top:231.14px;color:#b4b8c4;font-size:9.3px;font-weight:500;transform:scaleX(0.909);">スポンサープロダクト</div>
<svg style="left:58px;top:256px" width="10" height="10" viewBox="0 0 10 10"><rect x="0" y="0" width="10" height="10" rx="0.8" fill="#b4b8c4"/><rect x="1.4" y="1.6" width="3.6" height="4" fill="#121826"/><rect x="6.2" y="1.6" width="2.4" height="4" fill="#121826"/><rect x="1.4" y="6.8" width="1.8" height="1.8" fill="#121826"/><rect x="4.1" y="6.8" width="1.8" height="1.8" fill="#121826"/><rect x="6.8" y="6.8" width="1.8" height="1.8" fill="#121826"/></svg>
<div class="t" style="left:78px;top:257.64px;color:#b4b8c4;font-size:9.3px;font-weight:500;transform:scaleX(0.902);">スポンサーブランド</div>
<svg style="left:59px;top:282px" width="8" height="11" viewBox="0 0 8 11"><rect x="0" y="0" width="8" height="11" rx="1.2" fill="#fff"/><rect x="1.4" y="1.6" width="5.2" height="5" fill="#363c4c"/><rect x="2.6" y="8" width="2.8" height="1.4" fill="#363c4c"/></svg>
<div class="t" style="left:78px;top:283.94px;color:#fff;font-size:9.3px;font-weight:500;transform:scaleX(0.905);">スポンサーディスプレイ</div>
<div class="t" style="left:58px;top:308.6px;color:#5a6073;font-size:7.5px;transform:scaleX(0.956);">フルファネル</div>
<svg style="left:58px;top:331px" width="10" height="10" viewBox="0 0 10 10"><g fill="#b4b8c4"><rect x="0" y="0" width="4.2" height="4.2"/><rect x="5.8" y="0" width="4.2" height="4.2"/><rect x="0" y="5.8" width="4.2" height="4.2"/><rect x="5.8" y="5.8" width="4.2" height="4.2"/></g><g fill="#121826"><rect x="1.5" y="1.5" width="1.2" height="1.2"/><rect x="7" y="1.2" width="1.8" height="1.8"/><rect x="1.5" y="7.3" width="1.2" height="1.2"/><rect x="7.3" y="7.3" width="1.2" height="1.2"/></g></svg>
<div class="t" style="left:78px;top:332.24px;color:#b4b8c4;font-size:9.3px;font-weight:500;transform:scaleX(0.826);">DSP</div>
<div class="t" style="left:58px;top:356.1px;color:#5a6073;font-size:7.5px;transform:scaleX(0.967);">知能</div>
<svg style="left:58px;top:379px" width="10" height="10" viewBox="0 0 10 10"><rect x="0" y="0" width="10" height="10" rx="0.8" fill="#b4b8c4"/><path d="M1.4 7.2L3.8 4.6L5.6 6.2L8.6 2.8" stroke="#121826" stroke-width="1.2" fill="none"/></svg>
<div class="t" style="left:78px;top:380.24px;color:#b4b8c4;font-size:9.3px;font-weight:500;transform:scaleX(0.887);">売上</div>
<svg style="left:58px;top:405px" width="10" height="10" viewBox="0 0 10 10"><circle cx="6.9" cy="3.3" r="2.9" fill="#b4b8c4"/><path d="M4.8 4.2L0.6 8.4V9.8H2.4V8.7H3.5V7.6H4.6L6.2 6Z" fill="#b4b8c4"/><circle cx="7.8" cy="2.5" r="0.8" fill="#121826"/></svg>
<div class="t" style="left:78px;top:406.44px;color:#b4b8c4;font-size:9.3px;font-weight:500;transform:scaleX(0.940);">ターゲット&amp;検索</div>
<svg style="left:58px;top:431px" width="10" height="10" viewBox="0 0 10 10"><path d="M2.8 0H7.2V1.1H6.7V3.6L9.7 8C10.3 9 9.7 10 8.6 10H1.4C0.3 10 -0.3 9 0.3 8L3.3 3.6V1.1H2.8Z" fill="#b4b8c4"/><path d="M1.8 7H8.2" stroke="#121826" stroke-width="1"/></svg>
<div class="t" style="left:78px;top:432.74px;color:#b4b8c4;font-size:9.3px;font-weight:500;transform:scaleX(0.905);">トライアル</div>
<div class="abs" style="left:0px;top:693px;width:1280px;height:27px;background:#d4dae3;"></div>
<svg style="left:10px;top:701px" width="11" height="11" viewBox="0 0 11 11"><path d="M0 1.6L4.6 1V5.2H0ZM5.4 0.9L11 0V5.2H5.4ZM0 6H4.6V10.2L0 9.6ZM5.4 6H11V11L5.4 10.2Z" fill="#111"/></svg>
<svg style="left:42px;top:700px" width="12" height="12" viewBox="0 0 12 12"><circle cx="7.2" cy="4.6" r="3.6" fill="none" stroke="#111" stroke-width="1.2"/><path d="M4.6 7.4L0.8 11.2" stroke="#111" stroke-width="1.3"/></svg>
<svg style="left:74px;top:700.7px" width="12" height="12" viewBox="0 0 12 12"><circle cx="6" cy="6" r="4.7" fill="none" stroke="#111" stroke-width="1.7"/></svg>
<svg style="left:106px;top:701.5px" width="12" height="10" viewBox="0 0 12 10"><rect x="1.5" y="2.2" width="6" height="5.6" fill="none" stroke="#111" stroke-width="1.2"/><path d="M0 0.7H9M0 9.3H9" stroke="#111" stroke-width="1.3"/><rect x="10.4" y="0.4" width="1.4" height="1.6" fill="#111"/><rect x="10.4" y="3.6" width="1.4" height="6" fill="#111"/></svg>
<svg style="left:139px;top:700px" width="15" height="13" viewBox="0 0 15 13"><path d="M0.4 1.2H5L6.4 2.6H14.6V4H0.4Z" fill="#e8a91c"/><path d="M0.4 3.4H14.6V12.4H0.4Z" fill="#fbd666"/><path d="M3 7.4H12V12.4H9.4V9.6H5.6V12.4H3Z" fill="#3a9ae0"/></svg>
<div class="abs" style="left:133px;top:718px;width:27px;height:2px;background:#3b82d6;"></div>
<svg style="left:171px;top:699px" width="15" height="15" viewBox="0 0 15 15"><defs><linearGradient id="eg" x1="0" y1="1" x2="1" y2="0"><stop offset="0" stop-color="#1565c8"/><stop offset="0.55" stop-color="#1f9ad8"/><stop offset="1" stop-color="#4fd06a"/></linearGradient></defs><circle cx="7.5" cy="7.5" r="7.2" fill="url(#eg)"/><path d="M0.6 9.4C1 5.8 4.6 4.2 7.6 5.4C5.6 6 5 8 6 9.8C7 11.8 9.6 12.4 12.4 11.2C10.6 14.6 4.6 15 1.6 11.4C1 10.8 0.6 10 0.6 9.4Z" fill="#0f58b6"/><path d="M7 8.6C7 7.2 8.2 6.4 9.6 6.6C11 6.8 11.8 8 11.6 9H7.2Z" fill="#e9f2fb"/></svg>
<svg style="left:204px;top:699px" width="14" height="14" viewBox="0 0 14 14"><rect width="14" height="14" fill="#29b2d8"/><rect x="1.6" y="1.6" width="10.8" height="10.8" fill="#1588b8"/><path d="M5 3.2V10.6H10" stroke="#fff" stroke-width="1.8" fill="none"/></svg>
<svg style="left:237px;top:699px" width="12" height="14" viewBox="0 0 12 14"><path d="M0.6 3.4L7.4 0.4L11.4 1.6V12.4L7.4 13.6L0.6 10.8L7.4 11.6V2.8L3.2 4V9.6L0.6 10.8Z" fill="#dc3e15"/></svg>
<svg style="left:268px;top:699px" width="17.5" height="14.5" viewBox="0 0 16 13"><path d="M0.4 4.4L8 0.4L15.6 4.4V12.6H0.4Z" fill="#1f8fd6"/><path d="M2 3.4H14V8H2Z" fill="#fff"/><path d="M0.4 4.6L8 9.4L15.6 4.6V12.6H0.4Z" fill="#41b4f0"/></svg>
<svg style="left:302px;top:699px" width="14" height="14" viewBox="0 0 14 14"><path d="M4.6 3V1.8A1.2 1.2 0 0 1 5.8 0.6H8.2A1.2 1.2 0 0 1 9.4 1.8V3" stroke="#2a6cb4" stroke-width="1.1" fill="none"/><rect x="0.4" y="2.8" width="13.2" height="10.8" rx="1" fill="#1f4f8c"/><rect x="4" y="5.4" width="2.6" height="2.6" fill="#f25022"/><rect x="7.4" y="5.4" width="2.6" height="2.6" fill="#7fba00"/><rect x="4" y="8.8" width="2.6" height="2.6" fill="#00a4ef"/><rect x="7.4" y="8.8" width="2.6" height="2.6" fill="#ffb900"/></svg>
<svg style="left:335px;top:699px" width="14" height="14" viewBox="0 0 14 14"><path d="M3.2 1.6L11.6 0.6L13 11.4L4.6 13.4L1 10.4Z" fill="#a8cdd4"/><path d="M3.2 1.6L11.6 0.6L11 2.2L3 3.2Z" fill="#6f9aa6"/><path d="M11.6 0.6L13 11.4L12 12L10.8 2.2Z" fill="#d8dde0"/></svg>
<svg style="left:367px;top:698px" width="16" height="16" viewBox="0 0 16 16"><circle cx="7" cy="7" r="6.6" fill="#dd4a3c"/><path d="M7 7L1.2 3.8A6.6 6.6 0 0 0 5.6 13.4Z" fill="#2f9c4c"/><path d="M7 7L5.6 13.4A6.6 6.6 0 0 0 13.6 7Z" fill="#f2c12e"/><circle cx="7" cy="7" r="3" fill="#fff"/><circle cx="7" cy="7" r="2.3" fill="#3f7de0"/><circle cx="11.4" cy="11.6" r="4" fill="#2e7d1f"/><text x="11.4" y="13.6" font-size="5.5" font-weight="bold" font-family="Liberation Sans,sans-serif" text-anchor="middle" fill="#fff">K</text></svg>
<div class="abs" style="left:361px;top:718px;width:27px;height:2px;background:#3b82d6;"></div>
<svg style="left:400px;top:699px" width="15" height="15" viewBox="0 0 15 15"><circle cx="7.5" cy="7.5" r="7.4" fill="#fff"/><g stroke-width="1.7" stroke-linecap="round"><path d="M5.8 3.6V6.2" stroke="#36c5f0"/><path d="M3.6 9.2H6.2" stroke="#e01e5a"/><path d="M9.2 8.8V11.4" stroke="#ecb22e"/><path d="M8.8 5.8H11.4" stroke="#2eb67d"/><path d="M3.8 6.2H3.9" stroke="#36c5f0"/><path d="M5.8 11.2V11.3" stroke="#e01e5a"/><path d="M11.2 8.8H11.3" stroke="#ecb22e"/><path d="M9.2 3.7V3.8" stroke="#2eb67d"/></g></svg>
<div class="abs" style="left:394px;top:718px;width:27px;height:2px;background:#3b82d6;"></div>
<div class="t" style="left:1248px;top:697.2px;color:#1f2328;font-size:7.5px;transform:scaleX(0.905);">16:01</div>
<div class="t" style="left:1238px;top:709.0px;color:#1f2328;font-size:7.5px;transform:scaleX(1.012);">2022/01/19</div>
</body>
</html>
